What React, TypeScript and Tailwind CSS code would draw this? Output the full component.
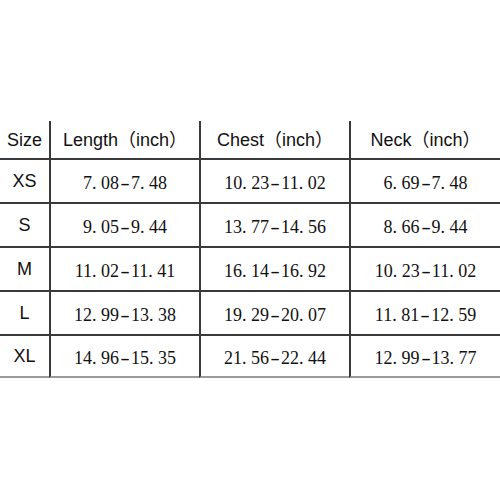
const rows = [
  { size: "XS", length: "7.08-7.48", chest: "10.23-11.02", neck: "6.69-7.48" },
  { size: "S", length: "9.05-9.44", chest: "13.77-14.56", neck: "8.66-9.44" },
  { size: "M", length: "11.02-11.41", chest: "16.14-16.92", neck: "10.23-11.02" },
  { size: "L", length: "12.99-13.38", chest: "19.29-20.07", neck: "11.81-12.59" },
  { size: "XL", length: "14.96-15.35", chest: "21.56-22.44", neck: "12.99-13.77" },
];

const sans = "font-['Liberation_Sans','Noto_Sans_CJK_SC',sans-serif]";
const head = `h-[39px] pt-[2px] flex items-center justify-center border-b-2 border-[#3a3a3a] text-[18px] ${sans}`;

function Range({ value }: { value: string }) {
  return (
    <span className="font-['Liberation_Serif',serif] text-[18px] pt-[5px]">
      {value.split("").map((ch, i) =>
        ch === "." ? (
          <span key={i} className="mr-[4.5px]">.</span>
        ) : ch === "-" ? (
          <span key={i} className="inline-block w-[12px] text-center scale-x-[1.6]">-</span>
        ) : (
          <span key={i}>{ch}</span>
        )
      )}
    </span>
  );
}

export default function App() {
  return (
    <div className="w-[500px] h-[500px] bg-white pt-[121px] text-[#111]">
      <div className="grid grid-cols-[49px_150px_150px_151px]">
        <div className={head}>Size</div>
        <div className={`${head} border-l-2`}>Length（inch）</div>
        <div className={`${head} border-l-2`}>Chest（inch）</div>
        <div className={`${head} border-l-2`}>Neck（inch）</div>
        {rows.map((r, i) => {
          const last = i === rows.length - 1;
          const line = last ? "h-[42px] border-b-2 border-b-[#9a9a9a]" : "h-[44px] border-b-2 border-b-[#3a3a3a]";
          return (
            <div key={r.size} className="contents">
              <div className={`${line} flex items-center justify-center text-[18px] ${sans}`}>{r.size}</div>
              <div className={`${line} border-l-2 border-l-[#3a3a3a] flex items-center justify-center`}>
                <Range value={r.length} />
              </div>
              <div className={`${line} border-l-2 border-l-[#3a3a3a] flex items-center justify-center`}>
                <Range value={r.chest} />
              </div>
              <div className={`${line} border-l-2 border-l-[#3a3a3a] flex items-center justify-center`}>
                <Range value={r.neck} />
              </div>
            </div>
          );
        })}
      </div>
    </div>
  );
}
